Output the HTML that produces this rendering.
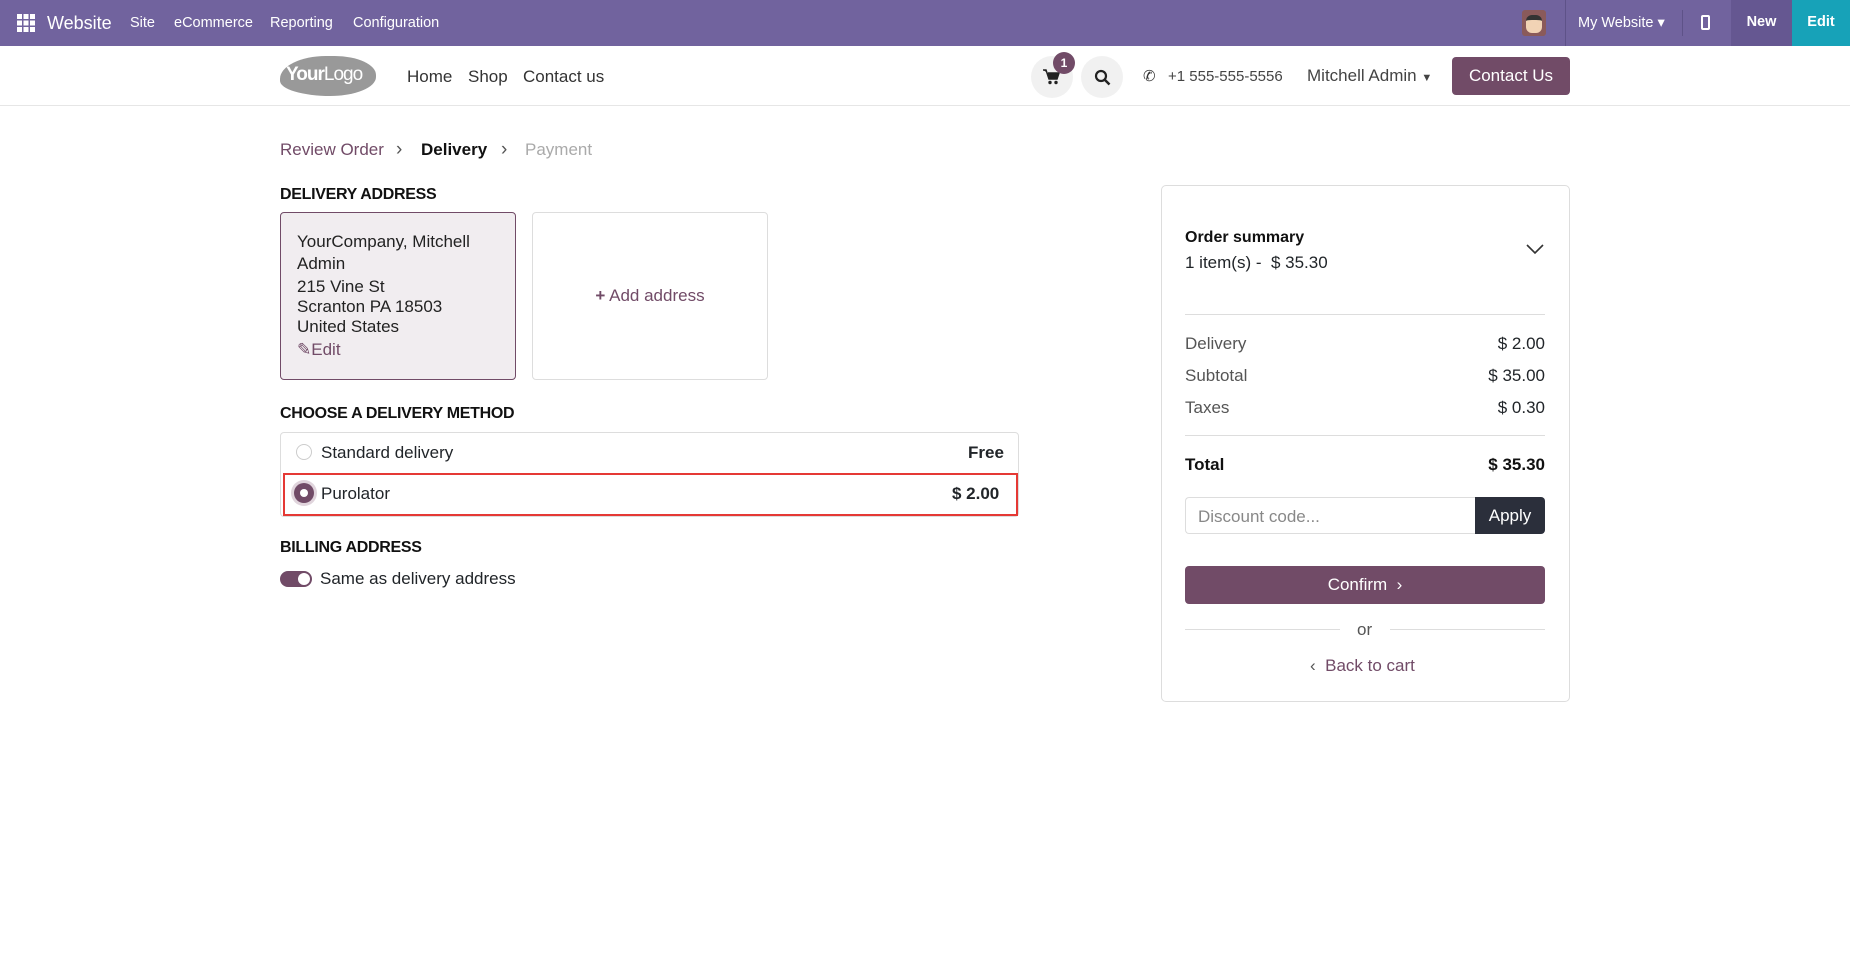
<!DOCTYPE html>
<html><head><meta charset="utf-8"><style>
*{box-sizing:border-box;margin:0;padding:0}
body{width:1850px;height:972px;background:#fff;font-family:"Liberation Sans",sans-serif;color:#212529;position:relative;overflow:hidden;font-size:17px}
.a{position:absolute;white-space:nowrap}
.top{position:absolute;left:0;top:0;width:1850px;height:46px;background:#71639e;color:#fff}
.hdr{position:absolute;left:0;top:46px;width:1850px;height:60px;border-bottom:1px solid #e6e6e6}
.lbl{font-weight:bold;font-size:16px;color:#111;letter-spacing:-0.3px}
.row{position:absolute;left:1185px;width:360px;display:flex;justify-content:space-between;font-size:17px}
</style></head><body>
<div class="top">
  <svg class="a" style="left:17px;top:14px" width="18" height="18" viewBox="0 0 18 18" fill="#fff"><rect x="0" y="0" width="5" height="5"/><rect x="6.5" y="0" width="5" height="5"/><rect x="13" y="0" width="5" height="5"/><rect x="0" y="6.5" width="5" height="5"/><rect x="6.5" y="6.5" width="5" height="5"/><rect x="13" y="6.5" width="5" height="5"/><rect x="0" y="13" width="5" height="5"/><rect x="6.5" y="13" width="5" height="5"/><rect x="13" y="13" width="5" height="5"/></svg>
  <div class="a" style="left:47px;top:13px;font-size:18px">Website</div>
  <div class="a" style="left:130px;top:15px;font-size:14.5px">Site</div>
  <div class="a" style="left:174px;top:15px;font-size:14.5px">eCommerce</div>
  <div class="a" style="left:270px;top:15px;font-size:14.5px">Reporting</div>
  <div class="a" style="left:353px;top:15px;font-size:14.5px">Configuration</div>
  <div class="a" style="left:1522px;top:10px;width:24px;height:26px;background:#8a5a5a;border-radius:3px;overflow:hidden"><div style="margin:5px 4px;width:16px;height:18px;background:#f1d3b5;border-radius:6px;border-top:5px solid #333"></div></div>
  <div class="a" style="left:1565px;top:0;width:1px;height:46px;background:#5e5288"></div>
  <div class="a" style="left:1578px;top:15px;font-size:14.5px">My Website ▾</div>
  <div class="a" style="left:1682px;top:10px;width:1px;height:26px;background:#5e5288"></div>
  <div class="a" style="left:1701px;top:15px;width:9px;height:15px;border:2px solid #fff;border-radius:2px"></div>
  <div class="a" style="left:1731px;top:0;width:61px;height:46px;background:#655791;color:#fff;font-weight:bold;font-size:14.5px;text-align:center;line-height:44px">New</div>
  <div class="a" style="left:1792px;top:0;width:58px;height:46px;background:#17a2b8;color:#fff;font-weight:bold;font-size:14.5px;text-align:center;line-height:44px">Edit</div>
</div>
<div class="hdr">
  <div class="a" style="left:280px;top:10px;width:96px;height:40px;background:#999;border-radius:50% 45% 50% 55%/60% 50% 50% 40%;color:#fff;font-size:19px;line-height:38px;padding-left:6px;letter-spacing:-1px"><b>Your</b>Logo</div>
  <div class="a" style="left:407px;top:21px;font-size:17px;color:#333">Home</div>
  <div class="a" style="left:468px;top:21px;font-size:17px;color:#333">Shop</div>
  <div class="a" style="left:523px;top:21px;font-size:17px;color:#333">Contact us</div>
  <div class="a" style="left:1031px;top:10px;width:42px;height:42px;border-radius:50%;background:#f1f1f1"></div>
  <svg class="a" style="left:1043px;top:23px" width="17" height="16" viewBox="0 0 17 16"><path d="M0 1h3l3 9h8l2-6H5" fill="#222" stroke="#222" stroke-width="1.5"/><circle cx="7" cy="13.5" r="1.7" fill="#222"/><circle cx="13" cy="13.5" r="1.7" fill="#222"/></svg>
  <div class="a" style="left:1053px;top:6px;width:22px;height:22px;border-radius:50%;background:#714b67;color:#fff;font-size:12px;text-align:center;line-height:22px;font-weight:bold">1</div>
  <div class="a" style="left:1081px;top:10px;width:42px;height:42px;border-radius:50%;background:#f1f1f1"></div>
  <svg class="a" style="left:1094px;top:23px" width="17" height="17" viewBox="0 0 17 17"><circle cx="7" cy="7" r="5" fill="none" stroke="#222" stroke-width="2.2"/><path d="M11 11l4.5 4.5" stroke="#222" stroke-width="2.5"/></svg>
  <div class="a" style="left:1143px;top:21px;font-size:15px;color:#333">✆</div>
  <div class="a" style="left:1168px;top:22px;font-size:15px;color:#444">+1 555-555-5556</div>
  <div class="a" style="left:1307px;top:20px;font-size:17px;color:#444">Mitchell Admin <span style="font-size:11px">▼</span></div>
  <div class="a" style="left:1452px;top:11px;width:118px;height:38px;background:#714b67;border-radius:4px;color:#fff;font-size:17px;text-align:center;line-height:38px">Contact Us</div>
</div>
<div class="a" style="left:280px;top:140px;font-size:17px;color:#714b67">Review Order</div>
<div class="a" style="left:396px;top:139px;font-size:19px;color:#555">›</div>
<div class="a" style="left:421px;top:140px;font-size:17px;font-weight:bold;color:#111">Delivery</div>
<div class="a" style="left:501px;top:139px;font-size:19px;color:#555">›</div>
<div class="a" style="left:525px;top:140px;font-size:17px;color:#aaa">Payment</div>

<div class="a lbl" style="left:280px;top:186px">DELIVERY ADDRESS</div>
<div class="a" style="left:280px;top:212px;width:236px;height:168px;background:#f1edf0;border:1px solid #714b67;border-radius:4px"></div>
<div class="a" style="left:297px;top:231px;font-size:17px;line-height:22px;color:#222">YourCompany, Mitchell<br>Admin</div>
<div class="a" style="left:297px;top:277px;font-size:17px;line-height:20px;color:#222">215 Vine St<br>Scranton PA 18503<br>United States</div>
<div class="a" style="left:297px;top:340px;font-size:17px;color:#714b67">✎Edit</div>
<div class="a" style="left:532px;top:212px;width:236px;height:168px;border:1px solid #ddd;border-radius:4px;text-align:center;line-height:166px;font-size:17px;color:#714b67"><b style="color:#714b67">+</b> Add address</div>

<div class="a lbl" style="left:280px;top:405px">CHOOSE A DELIVERY METHOD</div>
<div class="a" style="left:280px;top:432px;width:739px;height:85px;border:1px solid #ddd;border-radius:4px"></div>
<div class="a" style="left:296px;top:444px;width:16px;height:16px;border:1px solid #ccc;border-radius:50%"></div>
<div class="a" style="left:321px;top:443px;font-size:17px">Standard delivery</div>
<div class="a" style="left:968px;top:443px;font-size:17px;font-weight:bold">Free</div>
<div class="a" style="left:283px;top:473px;width:735px;height:43px;border:2px solid #e53935"></div>
<div class="a" style="left:294px;top:483px;width:20px;height:20px;border-radius:50%;background:#714b67;box-shadow:0 0 0 3px #e0d4dc"><div style="margin:6px;width:8px;height:8px;border-radius:50%;background:#fff"></div></div>
<div class="a" style="left:321px;top:484px;font-size:17px">Purolator</div>
<div class="a" style="left:952px;top:484px;font-size:17px;font-weight:bold">$ 2.00</div>

<div class="a lbl" style="left:280px;top:539px">BILLING ADDRESS</div>
<div class="a" style="left:280px;top:571px;width:32px;height:16px;border-radius:8px;background:#714b67"><div style="margin:2px 0 0 18px;width:12px;height:12px;border-radius:50%;background:#fff"></div></div>
<div class="a" style="left:320px;top:569px;font-size:17px">Same as delivery address</div>

<div class="a" style="left:1161px;top:185px;width:409px;height:517px;border:1px solid #ddd;border-radius:5px"></div>
<div class="a" style="left:1185px;top:229px;font-size:16px;font-weight:bold;color:#111">Order summary</div>
<div class="a" style="left:1185px;top:253px;font-size:17px">1 item(s) -&nbsp; $ 35.30</div>
<svg class="a" style="left:1526px;top:244px" width="18" height="11" viewBox="0 0 18 11"><path d="M1 1l8 8 8-8" fill="none" stroke="#333" stroke-width="1.6"/></svg>
<div class="a" style="left:1185px;top:314px;width:360px;height:1px;background:#ddd"></div>
<div class="row" style="top:334px"><span style="color:#555">Delivery</span><span>$ 2.00</span></div>
<div class="row" style="top:366px"><span style="color:#555">Subtotal</span><span>$ 35.00</span></div>
<div class="row" style="top:398px"><span style="color:#555">Taxes</span><span>$ 0.30</span></div>
<div class="a" style="left:1185px;top:435px;width:360px;height:1px;background:#ddd"></div>
<div class="row" style="top:455px;font-weight:bold;color:#111"><span>Total</span><span>$ 35.30</span></div>
<div class="a" style="left:1185px;top:497px;width:290px;height:37px;border:1px solid #ddd;border-right:none;border-radius:4px 0 0 4px;font-size:17px;color:#888;padding:9px 12px">Discount code...</div>
<div class="a" style="left:1475px;top:497px;width:70px;height:37px;background:#2b2f3b;border-radius:0 4px 4px 0;color:#fff;font-size:17px;text-align:center;line-height:37px">Apply</div>
<div class="a" style="left:1185px;top:566px;width:360px;height:38px;background:#714b67;border-radius:4px;color:#fff;font-size:17px;text-align:center;line-height:38px">Confirm &nbsp;›</div>
<div class="a" style="left:1185px;top:629px;width:155px;height:1px;background:#ddd"></div>
<div class="a" style="left:1390px;top:629px;width:155px;height:1px;background:#ddd"></div>
<div class="a" style="left:1357px;top:620px;font-size:17px;color:#555">or</div>
<div class="a" style="left:1310px;top:656px;font-size:17px;color:#714b67"><span style="color:#555">‹</span>&nbsp; Back to cart</div>
</body></html>
